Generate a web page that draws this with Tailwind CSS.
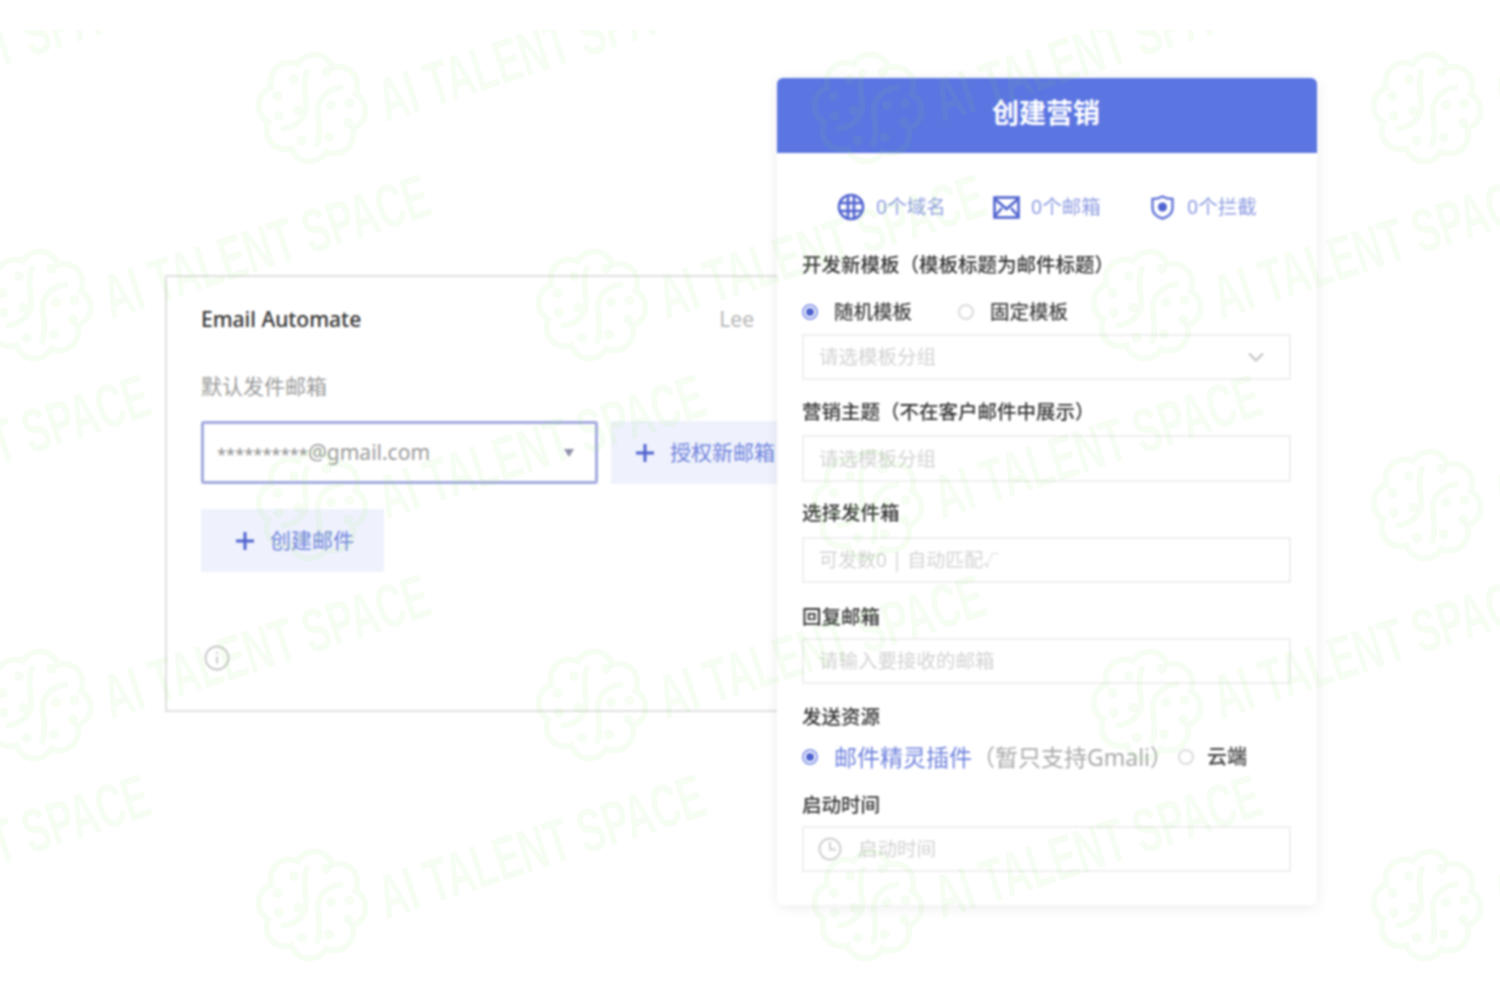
<!DOCTYPE html>
<html lang="zh-CN">
<head>
  <meta charset="UTF-8">
  <title>创建营销</title>
  <script src="https://cdn.jsdelivr.net/npm/@tailwindcss/browser@4"></script>
</head>
<body class="bg-white">
  <div class="relative w-[1500px] h-[1000px] overflow-hidden bg-white font-['Noto_Sans','Noto_Sans_CJK_SC',sans-serif]">
    <div class="flex items-start pl-[165px] pt-[78px] blur-[0.8px]">

      <!-- left card -->
      <div class="w-[612px] h-[437px] mt-[197px] border-2 border-[#e0e0e0] border-r-0 bg-white overflow-hidden pl-[34px]">
        <div class="flex items-center justify-between h-[30px] mt-[28px] pr-[23px]">
          <span class="text-[21px] font-medium text-[#333333]">Email Automate</span>
          <span class="text-[21px] text-[#b5b5b5]">Lee</span>
        </div>
        <div class="mt-[36px] h-[30px] leading-[30px] text-[21px] text-[#9a9a9a]">默认发件邮箱</div>
        <div class="flex gap-[13px] mt-[20px] w-[700px]">
          <div class="flex items-center justify-between w-[397px] h-[63px] border-[3px] border-[#a3aadf] rounded-[3px] pl-[13px] pr-[21px] text-[21px] text-[#9a9a9a]">
            <span><span class="text-[16.500px] text-[#8a8a8a]">**********</span>@gmail.com</span>
            <span class="w-0 h-0 border-x-[5px] border-x-transparent border-t-[8px] border-t-[#8c8fa8]"></span>
          </div>
          <div class="flex items-center gap-[15px] w-[240px] h-[63px] bg-[#eff2fc] pl-[24px] text-[21px] text-[#6f82dc] whitespace-nowrap">
            <svg class="w-[20px] h-[20px]" viewBox="0 0 20 20" fill="none" stroke="#4f62cf" stroke-width="3"><path d="M10 1v18M1 10h18"/></svg>
            <span>授权新邮箱</span>
          </div>
        </div>
        <div class="flex items-center gap-[15px] w-[183px] h-[63px] mt-[25px] bg-[#eff2fc] pl-[34px] text-[21px] text-[#6f82dc]">
          <svg class="w-[20px] h-[20px]" viewBox="0 0 20 20" fill="none" stroke="#4f62cf" stroke-width="3"><path d="M10 1v18M1 10h18"/></svg>
          <span>创建邮件</span>
        </div>
        <svg class="w-[26px] h-[26px] mt-[73px] ml-[3px]" viewBox="0 0 26 26" fill="none" stroke="#c4c4c4" stroke-width="1.8">
          <circle cx="13" cy="13" r="11.5"/><path d="M13 11.5v7M13 7v2"/>
        </svg>
      </div>

      <!-- right card -->
      <div class="w-[540px] h-[827px] bg-white rounded-[6px] shadow-[0_2px_14px_rgba(0,0,0,0.08)] relative">
        <div class="flex items-center justify-center h-[75px] pb-[5px] pr-[2px] bg-[#5b75e1] rounded-t-[6px] text-[27px] font-bold text-white">创建营销</div>
        <div class="pt-[39px] pl-[25px] pr-[26px]">
          <div class="flex h-[30px] items-center text-[19.500px] text-[#8d9be0] pl-[35px]">
            <div class="flex items-center gap-[11px] w-[156px]">
              <svg class="w-[28px] h-[28px]" viewBox="0 0 28 28" fill="none" stroke="#4f62cf" stroke-width="2.6">
                <circle cx="14" cy="14" r="12"/><path d="M3 10h22M3 18h22M11 3v22M17 3v22"/>
              </svg>
              <span>0个域名</span>
            </div>
            <div class="flex items-center gap-[11px] w-[158px]">
              <svg class="w-[27px] h-[23px]" viewBox="0 0 27 23" fill="none" stroke="#4f62cf" stroke-width="2.6">
                <rect x="1.5" y="1.5" width="24" height="20"/><path d="M2 3l11.500 10L25 3M2 20l7-8M25 20l-7-8"/>
              </svg>
              <span>0个邮箱</span>
            </div>
            <div class="flex items-center gap-[13px] whitespace-nowrap">
              <svg class="w-[23px] h-[25px]" viewBox="0 0 23 25" fill="none" stroke="#6274d6" stroke-width="2.4">
                <path d="M11.500 1.500C15 3.500 18 4 21.500 4v9c0 6-5 9-10 10.500-5-1.500-10-4.500-10-10.500V4c3.500 0 6.500-.5 10-2.500z"/>
                <circle cx="11.500" cy="12" r="4.500" fill="#4f62cf" stroke="none"/>
              </svg>
              <span>0个拦截</span>
            </div>
          </div>

          <div class="mt-[31px] h-[24px] leading-[24px] text-[19.500px] font-medium text-[#333333] whitespace-nowrap">开发新模板（模板标题为邮件标题）</div>
          <div class="flex items-center mt-[23px] h-[24px] text-[19.500px] font-medium text-[#444444]">
            <span class="flex items-center justify-center w-[16px] h-[16px] rounded-full border-2 border-[#8c9be8]"><span class="w-[8px] h-[8px] rounded-full bg-[#4f62cf]"></span></span>
            <span class="ml-[16px]">随机模板</span>
            <span class="w-[16px] h-[16px] ml-[46px] rounded-full border-2 border-[#dcdcdc]"></span>
            <span class="ml-[16px]">固定模板</span>
          </div>
          <div class="flex items-center justify-between mt-[10px] h-[46px] border-2 border-[#efefef] pl-[15px] pr-[25px] text-[19.500px] text-[#d2d2d2]">
            <span>请选模板分组</span>
            <svg class="w-[16px] h-[10px]" viewBox="0 0 16 10" fill="none" stroke="#c2c2c2" stroke-width="2"><path d="M1 1.500l7 7 7-7"/></svg>
          </div>

          <div class="mt-[20px] h-[24px] leading-[24px] text-[19.500px] font-medium text-[#333333] whitespace-nowrap">营销主题（不在客户邮件中展示）</div>
          <div class="flex items-center mt-[11px] h-[47px] border-2 border-[#efefef] pl-[15px] text-[19.500px] text-[#d2d2d2]">请选模板分组</div>

          <div class="mt-[19px] h-[24px] leading-[24px] text-[19.500px] font-medium text-[#333333]">选择发件箱</div>
          <div class="flex items-center mt-[12px] h-[46px] border-2 border-[#efefef] pl-[15px] text-[19px] text-[#d2d2d2]">可发数0 | 自动匹配<span class="text-[15px]">√</span></div>

          <div class="mt-[22px] h-[24px] leading-[24px] text-[19.500px] font-medium text-[#333333]">回复邮箱</div>
          <div class="flex items-center mt-[9px] h-[46px] border-2 border-[#efefef] pl-[15px] text-[19.500px] text-[#d2d2d2]">请输入要接收的邮箱</div>

          <div class="mt-[21px] h-[24px] leading-[24px] text-[19.500px] font-medium text-[#333333]">发送资源</div>
          <div class="flex items-center mt-[16px] h-[24px] whitespace-nowrap">
            <span class="flex items-center justify-center w-[16px] h-[16px] rounded-full border-2 border-[#8c9be8]"><span class="w-[8px] h-[8px] rounded-full bg-[#4f62cf]"></span></span>
            <span class="ml-[16px] text-[23px] text-[#6f82dc]">邮件精灵插件</span>
            <span class="text-[23px] text-[#a8a8a8]">（暂只支持Gmali）</span>
            <span class="w-[16px] h-[16px] ml-[5px] rounded-full border-2 border-[#dcdcdc]"></span>
            <span class="ml-[13px] text-[20px] font-medium text-[#444444]">云端</span>
          </div>

          <div class="mt-[24px] h-[24px] leading-[24px] text-[19.500px] font-medium text-[#333333]">启动时间</div>
          <div class="flex items-center gap-[16px] mt-[9px] h-[46px] border-2 border-[#efefef] pl-[14px] text-[19.500px] text-[#d2d2d2]">
            <svg class="w-[24px] h-[24px]" viewBox="0 0 24 24" fill="none" stroke="#d0d0d0" stroke-width="2"><circle cx="12" cy="12" r="10.500"/><path d="M12 5v7.500h6"/></svg>
            <span>启动时间</span>
          </div>
        </div>
      </div>
    </div>

    <!-- watermark over everything -->
    <svg class="absolute left-0 top-[30px] pointer-events-none blur-[0.6px]" width="1500" height="940" viewBox="0 30 1500 940">
      <defs>
        <g id="wm">
          <g transform="rotate(-18)" fill="none" stroke="#8fe860" stroke-opacity="0.08" stroke-width="6">
            <path d="M46 0A19 19 0 0 1 32 32A19 19 0 0 1 0 46A19 19 0 0 1-32 32A19 19 0 0 1-46 0A19 19 0 0 1-32-32A19 19 0 0 1 0-46A19 19 0 0 1 32-32A19 19 0 0 1 46 0Z"/>
            <path d="M-36 10C-22 14-8 8-4-6C-2-18 0-30 8-38M36-10C22-14 8-8 4 6C2 18 0 30-8 38"/>
            <g fill="#8fe860" fill-opacity="0.08" stroke="none">
              <circle cx="-29" cy="-22" r="5"/><circle cx="-8" cy="-33" r="5"/><circle cx="25" cy="-30" r="5"/><circle cx="-34" cy="-3" r="5"/>
              <circle cx="-14" cy="-2" r="5"/><circle cx="19" cy="3" r="5"/><circle cx="37" cy="7" r="5"/><circle cx="-20" cy="28" r="5"/>
              <circle cx="7" cy="33" r="5"/><circle cx="30" cy="25" r="5"/>
            </g>
          </g>
          <text x="74" y="14" transform="rotate(-18 74 14)" textLength="340" lengthAdjust="spacingAndGlyphs" font-family="'Liberation Sans',sans-serif" font-weight="700" font-size="62" fill="#8fe860" fill-opacity="0.08">AI TALENT SPACE</text>
        </g>
      </defs>
      <use href="#wm" x="-243" y="108"/>
      <use href="#wm" x="312" y="108"/>
      <use href="#wm" x="868" y="108"/>
      <use href="#wm" x="1427" y="108"/>
      <use href="#wm" x="37" y="305"/>
      <use href="#wm" x="592" y="305"/>
      <use href="#wm" x="1147" y="305"/>
      <use href="#wm" x="-243" y="505"/>
      <use href="#wm" x="312" y="505"/>
      <use href="#wm" x="868" y="505"/>
      <use href="#wm" x="1427" y="505"/>
      <use href="#wm" x="37" y="705"/>
      <use href="#wm" x="592" y="705"/>
      <use href="#wm" x="1147" y="705"/>
      <use href="#wm" x="-243" y="905"/>
      <use href="#wm" x="312" y="905"/>
      <use href="#wm" x="868" y="905"/>
      <use href="#wm" x="1427" y="905"/>
    </svg>
  </div>
</body>
</html>
